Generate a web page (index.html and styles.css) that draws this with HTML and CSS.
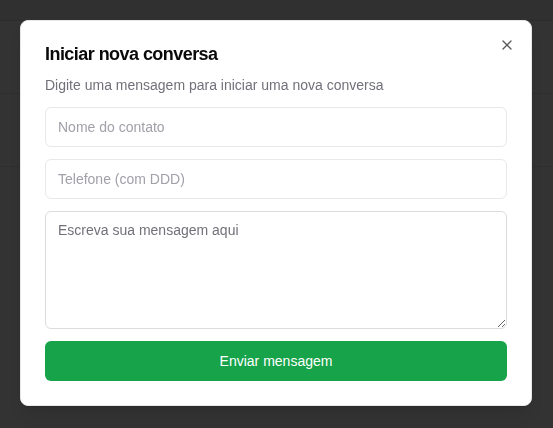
FILE: index.html
```html
<!DOCTYPE html>
<html lang="pt-BR">
<head>
<meta charset="utf-8">
<title>Iniciar nova conversa</title>
<link rel="stylesheet" href="styles.css">
</head>
<body>
<div class="page">
  <div class="page-header"></div>
  <div class="page-row"></div>
  <div class="page-row"></div>
</div>
<div class="overlay">
  <div class="dialog" role="dialog">
    <button class="close" aria-label="Fechar">
      <svg width="16" height="16" viewBox="0 0 24 24" fill="none" stroke="currentColor" stroke-width="2" stroke-linecap="round" stroke-linejoin="round"><path d="M18 6 6 18"/><path d="m6 6 12 12"/></svg>
    </button>
    <h2 class="title">Iniciar nova conversa</h2>
    <p class="desc">Digite uma mensagem para iniciar uma nova conversa</p>
    <input class="field" type="text" placeholder="Nome do contato">
    <input class="field" type="text" placeholder="Telefone (com DDD)">
    <textarea class="field area" placeholder="Escreva sua mensagem aqui"></textarea>
    <button class="send">Enviar mensagem</button>
  </div>
</div>
</body>
</html>
```
FILE: styles.css
```css
html, body {
  margin: 0;
  padding: 0;
  height: 100%;
}
body {
  background: #333333;
  font-family: "Liberation Sans", Arial, sans-serif;
  overflow: hidden;
}
.page {
  display: flex;
  flex-direction: column;
}
.page-header {
  height: 20px;
  background: #303030;
  border-bottom: 1px solid #2d2d2d;
}
.page-row {
  height: 72px;
  border-bottom: 1px solid #2e2e2e;
}
.overlay {
  position: fixed;
  inset: 0;
  display: flex;
  justify-content: flex-start;
  align-items: flex-start;
  padding: 20px 0 0 20px;
}
.dialog {
  position: relative;
  box-sizing: border-box;
  width: 512px;
  height: 386px;
  background: #ffffff;
  border: 1px solid #e5e7eb;
  border-radius: 8px;
  padding: 24px;
  display: flex;
  flex-direction: column;
  box-shadow: 0 10px 15px -3px rgba(0,0,0,0.1), 0 4px 6px -4px rgba(0,0,0,0.1);
}
.close {
  position: absolute;
  top: 16px;
  right: 16px;
  width: 16px;
  height: 16px;
  padding: 0;
  border: 0;
  background: none;
  color: #333333;
  opacity: 0.8;
  display: flex;
}
.title {
  margin: 0;
  font-size: 18px;
  line-height: 18px;
  font-weight: 700;
  color: #0a0a0a;
  letter-spacing: -0.55px;
}
.desc {
  margin: 12px 0 12px;
  font-size: 14px;
  line-height: 20px;
  color: #71717a;
}
.field {
  box-sizing: border-box;
  width: 100%;
  height: 40px;
  border: 1px solid #e8e8ea;
  border-radius: 6px;
  padding: 8px 12px;
  font-family: "Liberation Sans", Arial, sans-serif;
  font-size: 14px;
  line-height: 20px;
  color: #0a0a0a;
  background: #ffffff;
  margin: 0 0 12px;
  outline: none;
}
.field::placeholder {
  color: #a1a1aa;
}
.area {
  height: 118px;
  display: block;
  resize: both;
  border-color: #dcdcdf;
}
.area::placeholder {
  color: #71717a;
}
.send {
  height: 40px;
  border: 0;
  border-radius: 6px;
  background: #16a34a;
  color: #ffffff;
  font-family: "Liberation Sans", Arial, sans-serif;
  font-size: 14px;
  font-weight: 500;
}
```
